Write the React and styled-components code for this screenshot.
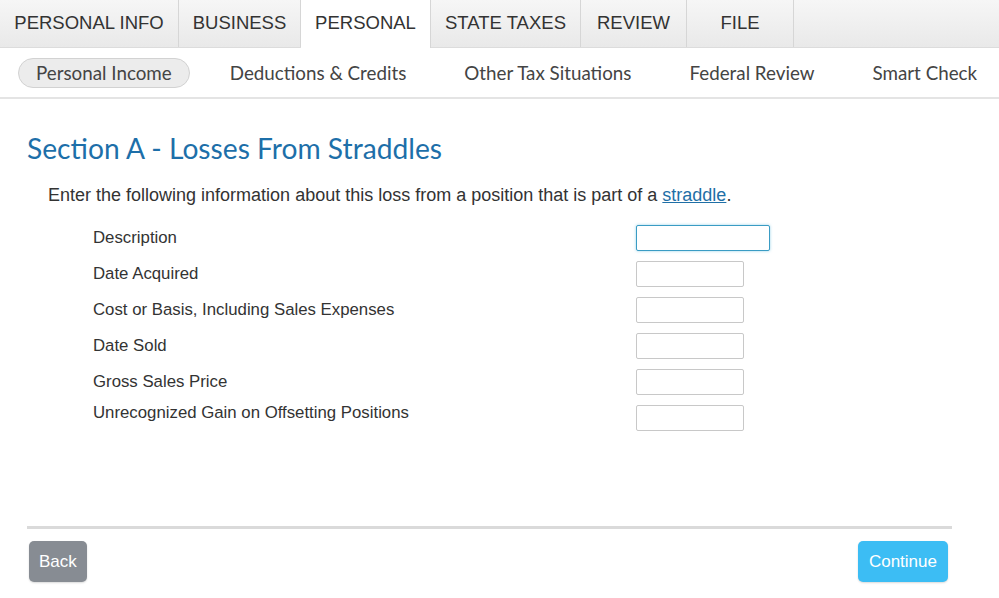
import React from "react"
import styled, { createGlobalStyle } from "styled-components"

const Global = createGlobalStyle`
  html, body {
    margin: 0;
    padding: 0;
    background: #fff;
  }
  body {
    font-family: "Liberation Sans", Arial, sans-serif;
    color: #333;
  }
`

const Page = styled.div`
  width: 999px;
  height: 598px;
  overflow: hidden;
  background: #fff;
`

const TopBar = styled.nav`
  display: flex;
  height: 47px;
  background: linear-gradient(#f6f6f6, #e9e9e9);
  border-bottom: 1px solid #dcdcdc;
`

const Tab = styled.div`
  display: flex;
  align-items: center;
  justify-content: center;
  width: ${(p) => p.$w}px;
  box-sizing: border-box;
  padding-bottom: 2px;
  font-size: 18.5px;
  color: #333;
  border-right: 1px solid #d6d6d6;
  background: ${(p) => (p.$active ? "#fff" : "transparent")};
  margin-bottom: ${(p) => (p.$active ? "-1px" : "0")};
`

const SubBar = styled.nav`
  display: flex;
  align-items: center;
  gap: 22px;
  height: 49px;
  padding-left: 18px;
  overflow: hidden;
  border-bottom: 2px solid #e4e4e4;
`

const SubItem = styled.div`
  display: flex;
  align-items: center;
  flex-shrink: 0;
  white-space: nowrap;
  height: 28px;
  padding: 0 17px;
  border-radius: 15px;
  font-family: Lato, "Open Sans", sans-serif;
  font-size: 18.8px;
  color: #444;
  background: ${(p) => (p.$active ? "#ececec" : "transparent")};
  border: 1px solid ${(p) => (p.$active ? "#d2d2d2" : "transparent")};
`

const Content = styled.main`
  padding: 33px 47px 0 27px;
`

const Heading = styled.h1`
  margin: 0;
  font-family: Lato, "Open Sans", sans-serif;
  font-weight: 400;
  font-size: 28.2px;
  line-height: 32px;
  color: #1d6fa9;
`

const Intro = styled.p`
  margin: 20px 0 0 21px;
  font-size: 18px;
  line-height: 22px;
  color: #333;
`

const Link = styled.a`
  color: #1f6fa6;
  text-decoration: underline;
`

const Form = styled.div`
  display: grid;
  grid-template-columns: 543px auto;
  grid-auto-rows: 36px;
  align-content: start;
  align-items: center;
  margin: 14px 0 0 66px;
  height: 306px;
`

const Label = styled.div`
  font-size: 16.8px;
  color: #333;
  transform: translateY(${(p) => (p.$raise ? "-5px" : "0")});
`

const Input = styled.div`
  box-sizing: border-box;
  width: ${(p) => (p.$focus ? "134px" : "108px")};
  height: 26px;
  border-radius: 2px;
  border: 1px solid ${(p) => (p.$focus ? "#3a9cc4" : "#c8c8c8")};
  box-shadow: ${(p) => (p.$focus ? "0 0 3px rgba(80, 180, 220, 0.6)" : "none")};
  background: #fff;
`

const Divider = styled.hr`
  margin: 0;
  border: none;
  height: 3px;
  background: #dadada;
`

const Actions = styled.div`
  display: flex;
  justify-content: space-between;
  padding: 12px 4px 0 2px;
`

const Button = styled.button`
  height: 41px;
  padding: 0 ${(p) => (p.$primary ? "11px" : "10px")};
  border: none;
  border-radius: 5px;
  font-family: "Liberation Sans", Arial, sans-serif;
  font-size: 17px;
  color: #fff;
  background: ${(p) => (p.$primary ? "#3cbdf4" : "#878c93")};
  box-shadow: 0 1px 2px rgba(0, 0, 0, 0.15);
`

const tabs = [
  ["PERSONAL INFO", 179],
  ["BUSINESS", 122],
  ["PERSONAL", 130],
  ["STATE TAXES", 150],
  ["REVIEW", 106],
  ["FILE", 107],
]
const subs = ["Personal Income", "Deductions & Credits", "Other Tax Situations", "Federal Review", "Smart Check"]
const fields = [
  "Description",
  "Date Acquired",
  "Cost or Basis, Including Sales Expenses",
  "Date Sold",
  "Gross Sales Price",
  "Unrecognized Gain on Offsetting Positions",
]

const App = () => {
  return (
    <Page>
      <Global />
      <TopBar>
        {tabs.map(([t, w]) => (
          <Tab key={t} $w={w} $active={t === "PERSONAL"}>
            {t}
          </Tab>
        ))}
      </TopBar>
      <SubBar>
        {subs.map((s, i) => (
          <SubItem key={s} $active={i === 0}>
            {s}
          </SubItem>
        ))}
      </SubBar>
      <Content>
        <Heading>Section A - Losses From Straddles</Heading>
        <Intro>
          Enter the following information about this loss from a position that is part of a{" "}
          <Link href="#">straddle</Link>.
        </Intro>
        <Form>
          {fields.map((f, i) => (
            <React.Fragment key={f}>
              <Label $raise={i === fields.length - 1}>{f}</Label>
              <Input $focus={i === 0} />
            </React.Fragment>
          ))}
        </Form>
        <Divider />
        <Actions>
          <Button>Back</Button>
          <Button $primary>Continue</Button>
        </Actions>
      </Content>
    </Page>
  )
}

export default App
